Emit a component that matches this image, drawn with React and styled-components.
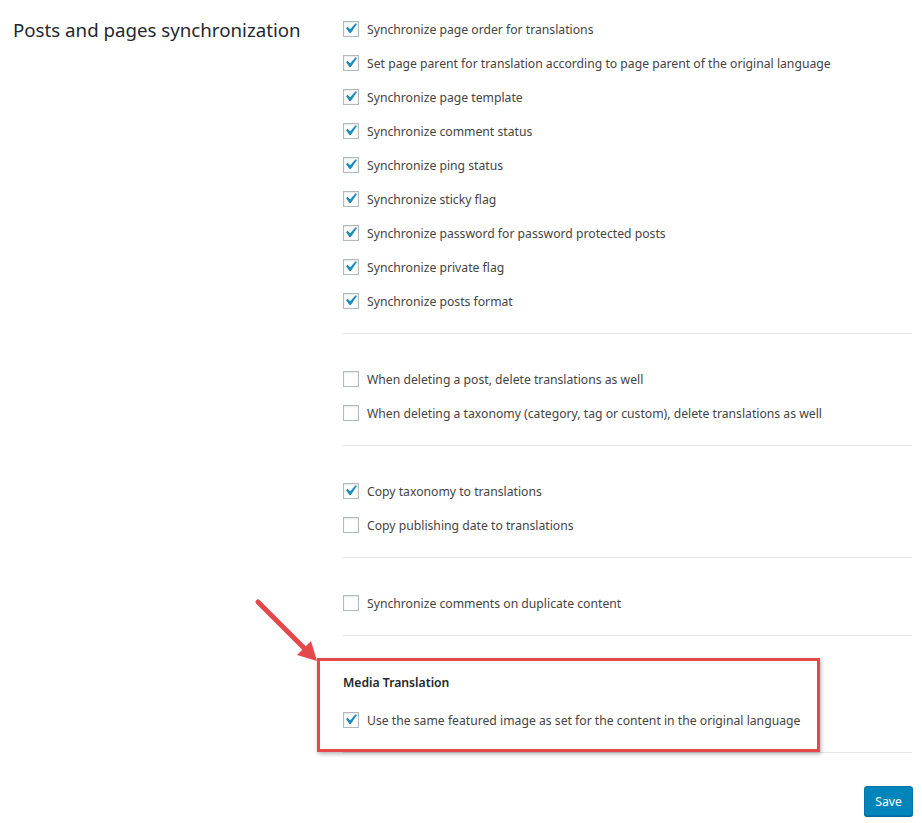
import styled, { createGlobalStyle } from "styled-components";

const GlobalStyle = createGlobalStyle`
  body {
    margin: 0;
    background: #fff;
    font-family: "Noto Sans", "Open Sans", sans-serif;
    color: #444;
  }
`;

const Page = styled.div`
  position: relative;
  width: 922px;
  height: 823px;
  display: grid;
  grid-template-columns: 330px 1fr;
  padding: 0 10px 0 13px;
  box-sizing: border-box;
`;

const Heading = styled.h2`
  margin: 17px 0 0;
  font-size: 18.7px;
  line-height: 26px;
  font-weight: 400;
  color: #23282d;
`;

const Settings = styled.div`
  display: flex;
  flex-direction: column;
`;

const Group = styled.div`
  position: relative;
  padding: ${(p) => (p.$first ? "12px" : "28px")} 0 15px;
  border-bottom: 1px solid #e5e5e5;
`;

const Row = styled.label`
  display: flex;
  align-items: center;
  gap: 8px;
  height: 34px;
  font-size: 12.2px;
  color: #444;
`;

const Box = styled.span`
  width: 16px;
  height: 16px;
  box-sizing: border-box;
  border: 1px solid #b4b9be;
  background: #fff;
  box-shadow: inset 0 1px 2px rgba(0, 0, 0, 0.1);
  display: flex;
  align-items: center;
  justify-content: center;
  flex-shrink: 0;
`;

const CheckMark = styled.svg`
  flex-shrink: 0;
  margin: -2px 0 0 -2px;
`;

const SubTitle = styled.div`
  height: 36px;
  margin-bottom: 3px;
  display: flex;
  align-items: center;
  font-size: 12.2px;
  font-weight: 600;
  color: #23282d;
`;

const Highlight = styled.div`
  position: absolute;
  left: -26px;
  top: 22px;
  width: 503px;
  height: 94px;
  box-sizing: border-box;
  border: 3px solid #e5484b;
  box-shadow: 1px 2px 4px rgba(0, 0, 0, 0.3);
  pointer-events: none;
`;

const Actions = styled.div`
  display: flex;
  justify-content: flex-end;
  padding-top: 33px;
`;

const SaveButton = styled.button`
  height: 30px;
  width: 49px;
  padding: 0;
  margin-right: -1px;
  border: 1px solid #0073aa;
  border-radius: 3px;
  background: #0085ba;
  color: #fff;
  font-family: inherit;
  font-size: 12.2px;
  box-shadow: 0 1px 0 #006799;
`;

const Arrow = styled.svg`
  position: absolute;
  left: 250px;
  top: 594px;
`;

function Check({ checked }) {
  return (
    <Box>
      {checked && (
        <CheckMark width="21" height="21" viewBox="0 0 20 20">
          <path
            d="M14.83 4.89l1.34.94-5.81 8.38H9.02L5.78 9.67l1.34-1.25 2.57 2.4z"
            fill="#1e8cbe"
          />
        </CheckMark>
      )}
    </Box>
  );
}

function Option({ checked, children }) {
  return (
    <Row>
      <Check checked={checked} />
      <span>{children}</span>
    </Row>
  );
}

const groups = [
  [
    [true, "Synchronize page order for translations"],
    [true, "Set page parent for translation according to page parent of the original language"],
    [true, "Synchronize page template"],
    [true, "Synchronize comment status"],
    [true, "Synchronize ping status"],
    [true, "Synchronize sticky flag"],
    [true, "Synchronize password for password protected posts"],
    [true, "Synchronize private flag"],
    [true, "Synchronize posts format"],
  ],
  [
    [false, "When deleting a post, delete translations as well"],
    [false, "When deleting a taxonomy (category, tag or custom), delete translations as well"],
  ],
  [
    [true, "Copy taxonomy to translations"],
    [false, "Copy publishing date to translations"],
  ],
  [[false, "Synchronize comments on duplicate content"]],
];

export default function App() {
  return (
    <>
      <GlobalStyle />
      <Page>
        <Heading>Posts and pages synchronization</Heading>
        <Settings>
          {groups.map((g, i) => (
            <Group key={i} $first={i === 0}>
              {g.map(([c, t]) => (
                <Option key={t} checked={c}>
                  {t}
                </Option>
              ))}
            </Group>
          ))}
          <Group>
            <SubTitle>Media Translation</SubTitle>
            <Option checked>
              Use the same featured image as set for the content in the original language
            </Option>
            <Highlight />
          </Group>
          <Actions>
            <SaveButton>Save</SaveButton>
          </Actions>
        </Settings>
        <Arrow width="75" height="75" viewBox="0 0 75 75">
          <line x1="8" y1="8" x2="56" y2="56" stroke="#e5484b" strokeWidth="5" strokeLinecap="round" />
          <polygon points="67,67 47,61 61,47" fill="#e5484b" />
        </Arrow>
      </Page>
    </>
  );
}
